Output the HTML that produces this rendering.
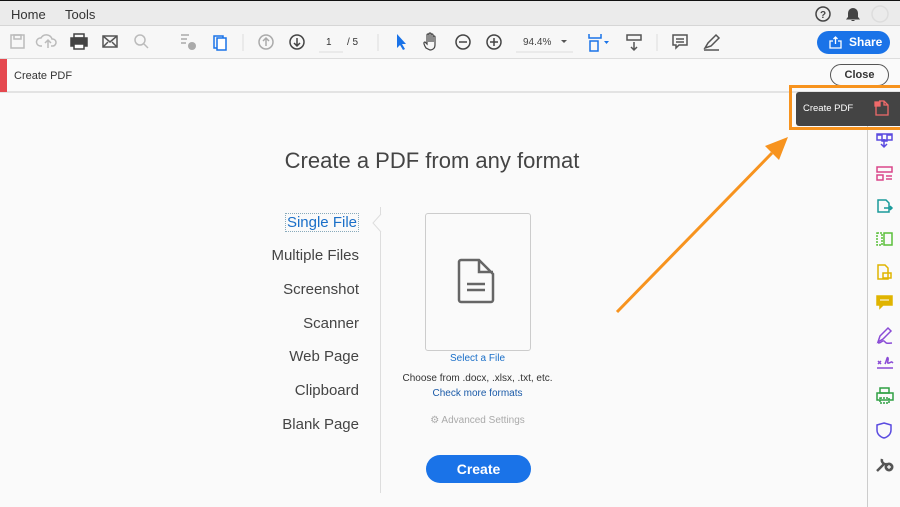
<!DOCTYPE html>
<html><head><style>
*{margin:0;padding:0;box-sizing:border-box}
body{width:900px;height:507px;overflow:hidden;background:#fafafa;font-family:"Liberation Sans",sans-serif;position:relative;color:#333}
.abs{position:absolute}
.menu{left:0;top:0;width:900px;height:26px;background:#ebebeb;border-top:1px solid #111;border-bottom:1px solid #d6d6d6}
.menu span{position:absolute;top:6px;font-size:13px;color:#333}
.tb{left:0;top:26px;width:900px;height:33px;background:#f7f7f7;border-bottom:1px solid #ddd}
.bar{left:0;top:59px;width:900px;height:34px;background:#fafafa;border-bottom:2px solid #e3e3e3}
.sep{position:absolute;top:8px;width:1px;height:18px;background:#ddd}
.nav{position:absolute;right:541px;font-size:15px;color:#444;text-align:right;white-space:nowrap}
</style></head><body>
<div class="abs menu"><span style="left:11px">Home</span><span style="left:65px">Tools</span>
<svg class="abs" style="left:814px;top:4px" width="76" height="20"><circle cx="9" cy="9" r="7" fill="none" stroke="#444" stroke-width="1.5"/><text x="6" y="13" font-size="10" font-family="Liberation Sans" font-weight="bold" fill="#444">?</text><path d="M33 14h12l-1.5-2v-4a4.5 4.5 0 0 0-9 0v4z M37.5 15.5h3" fill="#444" stroke="#444"/><circle cx="66" cy="9" r="8" fill="none" stroke="#ddd" stroke-width="1.5"/></svg>
</div>
<div class="abs tb">
<svg width="900" height="33" fill="none" stroke-width="1.5">
<rect x="11" y="9" width="13" height="13" stroke="#bbb"/><rect x="14" y="9" width="7" height="4" stroke="#bbb"/>
<path d="M42 20h-2a4 4 0 0 1 1-8a6 6 0 0 1 11 1a3.5 3.5 0 0 1 1 7h-2 M48 22v-8 M45 17l3-3 3 3" stroke="#bbb"/>
<rect x="71" y="12" width="16" height="8" fill="#444" stroke="#444"/><rect x="74" y="8" width="10" height="4" stroke="#444"/><rect x="74" y="18" width="10" height="5" fill="#fff" stroke="#444"/>
<rect x="103" y="10" width="14" height="11" stroke="#555"/><path d="M103 10l7 6 7-6 M103 21l5-5 M117 21l-5-5" stroke="#555"/>
<circle cx="140" cy="14" r="5" stroke="#bbb"/><path d="M144 18l4 4" stroke="#bbb"/>
<path d="M181 9h8 M181 13h6 M181 17h5" stroke="#aaa"/><circle cx="192" cy="20" r="4" fill="#aaa" stroke="none"/>
<rect x="214" y="10" width="9" height="12" stroke="#1a73e8"/><rect x="217" y="12" width="9" height="12" fill="#fff" stroke="#1a73e8"/>
<line x1="243" y1="8" x2="243" y2="25" stroke="#ddd" stroke-width="1"/>
<circle cx="266" cy="16" r="7" stroke="#aaa"/><path d="M266 20v-8 M263 15l3-3 3 3" stroke="#aaa"/>
<circle cx="297" cy="16" r="7" stroke="#444"/><path d="M297 12v8 M294 17l3 3 3-3" stroke="#444"/>
<line x1="319" y1="26" x2="343" y2="26" stroke="#ddd" stroke-width="1"/>
<line x1="378" y1="8" x2="378" y2="25" stroke="#ddd" stroke-width="1"/>
<path d="M397 8l0 14 3-3 3 5 2-1-3-5 4 0z" fill="#1a73e8" stroke="none"/>
<path d="M426 22c-2-3-3-6-1-6l2 2v-9a1 1 0 0 1 2 0v7v-8a1 1 0 0 1 2 0v8v-7a1 1 0 0 1 2 0v7v-5a1 1 0 0 1 2 0v8c0 3-2 5-5 5z" stroke="#444" stroke-width="1.2"/>
<circle cx="463" cy="16" r="7" stroke="#444"/><path d="M459 16h8" stroke="#444"/>
<circle cx="494" cy="16" r="7" stroke="#444"/><path d="M490 16h8 M494 12v8" stroke="#444"/>
<line x1="516" y1="26" x2="573" y2="26" stroke="#ddd" stroke-width="1"/>
<path d="M561 14h6l-3 3z" fill="#555" stroke="none"/>
<path d="M589 8v4h12v-4 M590 15h8v10h-8z" stroke="#1a73e8"/><path d="M604 15h5l-2.5 3z" fill="#1a73e8" stroke="none"/>
<rect x="627" y="9" width="14" height="5" stroke="#555"/><path d="M634 16v8 M631 21l3 3 3-3" stroke="#555"/>
<line x1="657" y1="8" x2="657" y2="25" stroke="#ddd" stroke-width="1"/>
<path d="M673 9h14v10h-8l-3 3v-3h-3z M676 13h8 M676 16h8" stroke="#555"/>
<path d="M705 22l3-5 8-8 3 3-8 8z M704 24h15" stroke="#555"/>
</svg>
<span class="abs" style="left:326px;top:11px;font-size:10px;color:#333">1</span>
<span class="abs" style="left:347px;top:11px;font-size:10px;color:#333">/ 5</span>
<span class="abs" style="left:523px;top:11px;font-size:10px;color:#444">94.4%</span>
<div class="abs" style="left:817px;top:5px;width:73px;height:23px;border-radius:12px;background:#1a73e8;color:#fff;font-size:12px;font-weight:bold;line-height:23px;padding-left:32px">Share
<svg class="abs" style="left:12px;top:5px" width="13" height="13" fill="none" stroke="#fff" stroke-width="1.3"><path d="M4 5H1v7h11V5H9 M6.5 8V1 M4.5 3l2-2 2 2"/></svg></div>
</div>
<div class="abs bar">
<div class="abs" style="left:0;top:0;width:7px;height:33px;background:#e5484f"></div>
<span class="abs" style="left:14px;top:11px;font-size:11px;color:#333">Create PDF</span>
<div class="abs" style="left:830px;top:5px;width:59px;height:22px;border:1px solid #555;border-radius:11px;font-size:11px;font-weight:bold;text-align:center;line-height:20px;color:#333">Close</div>
</div>
<div class="abs" style="left:867px;top:93px;width:1px;height:414px;background:#ccc"></div>
<!-- right icons -->
<svg class="abs" style="left:868px;top:125px" width="32" height="350" fill="none" stroke-width="1.5">
<path d="M9 10h5v6h5v-6h5 M16 14v8 M13 19l3 3 3-3" stroke="#5a4be0"/><rect x="9" y="9" width="15" height="6" stroke="#5a4be0"/>
<rect x="9" y="42" width="15" height="5" stroke="#d9468a"/><rect x="9" y="50" width="6" height="5" stroke="#d9468a"/><path d="M18 51h6 M18 54h6" stroke="#d9468a"/>
<path d="M10 75h8l3 3v9h-11z M16 83h8 M22 81l2 2-2 2" stroke="#1a9a9a"/>
<rect x="16" y="108" width="8" height="12" stroke="#5bbf3a"/><rect x="9" y="108" width="5" height="12" stroke="#5bbf3a" stroke-dasharray="2 1"/>
<path d="M10 140h7l3 3v11h-10z M15 148h8v5h-8z" stroke="#e0b400"/>
<path d="M9 171h15v9h-9l-3 3v-3h-3z" fill="#e0b400" stroke="#e0b400"/><path d="M12 175h9" stroke="#fff" stroke-width="1"/>
<path d="M10 217l2-6 8-8 3 3-8 8z M10 218c4 0 4-3 6-2s0 3 8 2" stroke="#8a4bd6"/>
<path d="M10 236l3 3 M13 236l-3 3 M17 239c2-4 2-8 3-6s-2 6 1 5 2-2 4 0 M9 243h16" stroke="#8a4bd6"/>
<rect x="9" y="268" width="16" height="7" stroke="#2ea043"/><rect x="12" y="263" width="9" height="5" stroke="#2ea043"/><rect x="12" y="273" width="9" height="5" stroke="#2ea043" stroke-dasharray="2 1"/>
<path d="M16 298l7 2v5c0 4-3 7-7 8c-4-1-7-4-7-8v-5z" stroke="#5a4be0"/>
<path d="M9 346l7-7 M14 334a4 4 0 0 0 5 5" stroke="#555" stroke-width="2.5"/><circle cx="21" cy="342" r="4.5" fill="#555"/><path d="M19 342h4 M21 340v4" stroke="#fff" stroke-width="1.2"/>
</svg>
<!-- tooltip -->
<div class="abs" style="left:789px;top:85px;width:111px;height:45px;border:3px solid #f7931e;border-right:none"></div>
<div class="abs" style="left:796px;top:92px;width:104px;height:34px;background:#444;border-radius:3px 0 0 3px;color:#fff;font-size:9.5px;line-height:34px;padding-left:7px">Create PDF
<svg class="abs" style="left:78px;top:7px" width="16" height="18" fill="none" stroke="#f06a6a" stroke-width="1.3"><path d="M5 2h5l4 4v10H2V6 M10 2v4h4"/><rect x="1" y="3" width="5" height="4" fill="#f06a6a"/></svg></div>
<!-- arrow -->
<svg class="abs" style="left:0;top:0" width="900" height="507"><path d="M617 312L772 153" stroke="#f7931e" stroke-width="3"/><path d="M788 137L765 146L779 160z" fill="#f7931e"/></svg>
<div class="abs" style="left:0;top:148px;width:864px;text-align:center;font-size:22px;color:#444">Create a PDF from any format</div>
<div class="nav" style="top:213px;color:#1a6fc8;border:1px dotted #8ab;padding:0 1px">Single File</div>
<div class="nav" style="top:247px">Multiple Files</div>
<div class="nav" style="top:281px">Screenshot</div>
<div class="nav" style="top:315px">Scanner</div>
<div class="nav" style="top:348px">Web Page</div>
<div class="nav" style="top:382px">Clipboard</div>
<div class="nav" style="top:416px">Blank Page</div>
<div class="abs" style="left:380px;top:207px;width:1px;height:286px;background:#ddd"></div>
<svg class="abs" style="left:372px;top:214px" width="10" height="18"><path d="M9 0L1 9l8 9" fill="#fafafa" stroke="#ddd"/></svg>
<div class="abs" style="left:425px;top:213px;width:106px;height:138px;border:1px solid #ccc;border-radius:3px;background:#fafafa"></div>
<svg class="abs" style="left:456px;top:257px" width="44" height="50" fill="none" stroke="#666" stroke-width="2.5"><path d="M5 3h18l14 14v26a2 2 0 0 1-2 2H5a2 2 0 0 1-2-2V5a2 2 0 0 1 2-2z M23 3v12h14 M11 27h18 M11 33h18"/></svg>
<div class="abs" style="left:380px;top:353px;width:195px;text-align:center;font-size:10px;color:#1a6fc8">Select a File</div>
<div class="abs" style="left:380px;top:373px;width:195px;text-align:center;font-size:10px;color:#333">Choose from .docx, .xlsx, .txt, etc.</div>
<div class="abs" style="left:380px;top:388px;width:195px;text-align:center;font-size:10px;color:#1a5aa8">Check more formats</div>
<div class="abs" style="left:380px;top:415px;width:195px;text-align:center;font-size:10px;color:#aaa">⚙ Advanced Settings</div>
<div class="abs" style="left:426px;top:455px;width:105px;height:28px;border-radius:14px;background:#1a73e8;color:#fff;font-size:14px;font-weight:bold;text-align:center;line-height:28px">Create</div>
</body></html>
